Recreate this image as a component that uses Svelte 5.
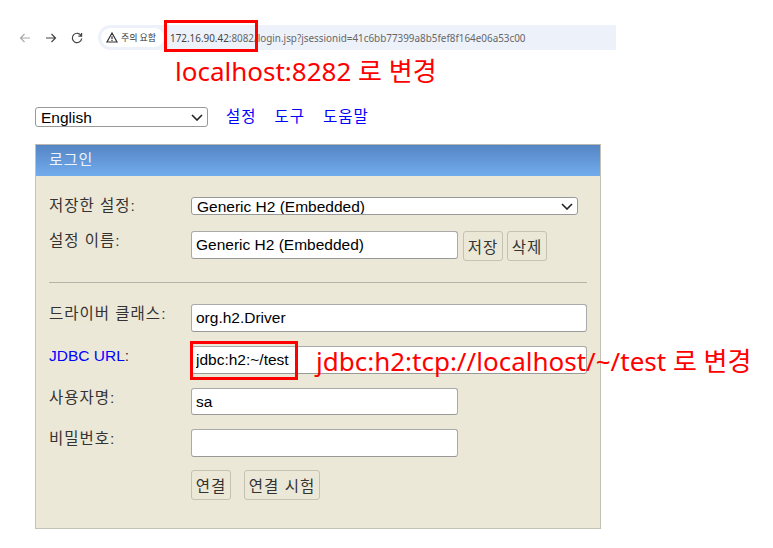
<script lang="ts">
  let language = $state("en");
  let saved = $state("Generic H2 (Embedded)");
  let name = $state("Generic H2 (Embedded)");
  let driver = $state("org.h2.Driver");
  let url = $state("jdbc:h2:~/test");
  let user = $state("sa");
  let password = $state("");
</script>

{#snippet chevron()}
  <svg class="chevron" width="12" height="7" viewBox="0 0 12 7"><path d="M1 1l5 5 5-5" /></svg>
{/snippet}

<div class="page">
  <!-- browser address bar -->
  <div class="toolbar">
    <div class="nav">
      <svg width="12" height="12" viewBox="0 0 12 12" class="dim"><path d="M11 6H1.5M5.5 2 1.5 6l4 4" /></svg>
      <svg width="12" height="12" viewBox="0 0 12 12"><path d="M1 6h9.5M6.5 2l4 4-4 4" /></svg>
      <svg width="12" height="12" viewBox="0 0 12 12"><path d="M10.3 4A4.7 4.7 0 1 0 10.7 6.5M10.6 1v3.2H7.4" /></svg>
    </div>
    <div class="omnibox">
      <span class="chip">
        <svg width="12" height="11" viewBox="0 0 12 11"><path d="M6 1 1 10h10zM6 4.2v3M6 8v1" /></svg>
        주의 요함
      </span>
      <span class="address"><b>172.16.90.42</b>:8082/login.jsp?jsessionid=41c6bb77399a8b5fef8f164e06a53c00</span>
    </div>
  </div>

  <!-- H2 console login -->
  <div class="content">
    <div class="lang-row">
      <div class="select-wrap lang">
        <select bind:value={language}>
          <option value="en">English</option>
          <option value="ko">한국어</option>
        </select>
        {@render chevron()}
      </div>
      <a href="#settings">설정</a>
      <a href="#tools">도구</a>
      <a href="#help">도움말</a>
    </div>

    <div class="panel">
      <div class="panel-head">로그인</div>
      <div class="panel-body">
        <div class="row first">
          <span class="label">저장한 설정:</span>
          <div class="select-wrap saved">
            <select bind:value={saved}>
              <option>Generic H2 (Embedded)</option>
              <option>Generic H2 (Server)</option>
            </select>
            {@render chevron()}
          </div>
        </div>
        <div class="row name-row">
          <span class="label">설정 이름:</span>
          <input class="short" bind:value={name} />
          <button class="side first-side">저장</button>
          <button class="side">삭제</button>
        </div>
        <hr />
        <div class="row">
          <span class="label">드라이버 클래스:</span>
          <input class="wide" bind:value={driver} />
        </div>
        <div class="row">
          <span class="label"><a href="#url" class="plain">JDBC URL</a>:</span>
          <input class="wide" bind:value={url} />
        </div>
        <div class="row user-row">
          <span class="label">사용자명:</span>
          <input class="short" bind:value={user} />
        </div>
        <div class="row">
          <span class="label">비밀번호:</span>
          <input class="short" type="password" bind:value={password} />
        </div>
        <div class="row actions">
          <span class="label"></span>
          <button class="connect">연결</button>
          <button class="test">연결 시험</button>
        </div>
      </div>
    </div>
  </div>

  <!-- annotations pasted on top of the screenshot -->
  <div class="mark mark-host"></div>
  <div class="note note-host">localhost:8282 로 변경</div>
  <div class="mark mark-url"></div>
  <div class="note note-url">jdbc:h2:tcp://localhost/~/test 로 변경</div>
</div>

<style>
  :global(body) {
    margin: 0;
    background: #ffffff;
  }
  .page {
    position: relative;
    width: 773px;
    height: 548px;
    overflow: hidden;
    font-family: "Liberation Sans", "Noto Sans CJK KR", sans-serif;
    color: #333;
  }
  .toolbar {
    display: flex;
    align-items: center;
    height: 25px;
    padding: 25px 0 0 19px;
  }
  .nav {
    display: flex;
    gap: 14px;
    width: 79px;
  }
  .nav svg {
    fill: none;
    stroke: #444;
    stroke-width: 1.2;
  }
  .nav .dim {
    stroke: #aaa;
  }
  .omnibox {
    display: flex;
    align-items: center;
    width: 515px;
    height: 25px;
    padding-left: 3px;
    background: #edf2fa;
    border-radius: 13px 0 0 13px;
  }
  .chip {
    display: flex;
    align-items: center;
    gap: 3px;
    width: 58px;
    height: 19px;
    padding-left: 5px;
    background: #fff;
    border-radius: 10px;
    font-family: "Noto Sans CJK KR", sans-serif;
    font-size: 9px;
    color: #333;
    white-space: nowrap;
  }
  .chip svg {
    flex: none;
    fill: none;
    stroke: #333;
    stroke-width: 1.2;
  }
  .address {
    margin-left: 6px;
    font-family: "Noto Sans", sans-serif;
    font-size: 9.9px;
    color: #666;
    white-space: nowrap;
  }
  .address b {
    font-weight: 400;
    color: #444;
  }
  .content {
    padding: 57px 0 0 35px;
  }
  .lang-row {
    display: flex;
    align-items: flex-start;
    height: 20px;
    font-size: 15.5px;
    line-height: 19px;
    letter-spacing: 1px;
  }
  .lang-row a {
    margin-right: 18px;
    color: #0000ff;
    text-decoration: none;
  }
  .select-wrap {
    position: relative;
    box-sizing: border-box;
  }
  .select-wrap select {
    display: block;
    width: 100%;
    height: 100%;
    appearance: none;
    box-sizing: border-box;
    padding: 0 0 0 5px;
    font-family: "Liberation Sans", sans-serif;
    font-size: 15.5px;
    color: #000;
    background: #fff;
    border: 1px solid #999;
    border-radius: 3px;
  }
  .chevron {
    position: absolute;
    top: 50%;
    right: 5px;
    margin-top: -3px;
    fill: none;
    stroke: #222;
    stroke-width: 1.6;
    pointer-events: none;
  }
  .lang {
    width: 173px;
    height: 20px;
    margin-right: 18px;
  }
  .panel {
    width: 566px;
    height: 385px;
    margin-top: 17px;
    box-sizing: border-box;
    border: 1px solid #c4c2b4;
    border-top-color: #b8b8b0;
    background: #ece8d8;
  }
  .panel-head {
    height: 31px;
    line-height: 30px;
    padding-left: 13px;
    font-size: 15px;
    letter-spacing: 1px;
    color: #eef3fa;
    background: linear-gradient(#5585c4, #72aced);
  }
  .panel-body {
    padding: 21px 13px 0;
  }
  .row {
    display: flex;
    align-items: flex-start;
    height: 28px;
    margin-bottom: 14px;
  }
  .row.first {
    height: 18px;
    margin-bottom: 16px;
  }
  .name-row {
    margin-bottom: 0;
  }
  .user-row {
    height: 27px;
  }
  .user-row input {
    height: 27px;
  }
  .label {
    flex: none;
    width: 142px;
    margin-top: 1px;
    font-size: 15.5px;
    line-height: 18px;
    letter-spacing: 1px;
    color: #333;
  }
  .row.first .label {
    margin-top: 0;
  }
  .name-row .label {
    margin-top: 1px;
  }
  .plain {
    letter-spacing: 0;
    color: #0000ff;
    text-decoration: none;
  }
  .saved {
    width: 387px;
    height: 18px;
  }
  input {
    box-sizing: border-box;
    height: 28px;
    padding: 0 4px;
    font-family: "Liberation Sans", sans-serif;
    font-size: 15.5px;
    color: #000;
    background: #fff;
    border: 1px solid #aaa;
    border-bottom-color: #999;
    border-radius: 3px;
  }
  .short {
    width: 267px;
  }
  .wide {
    width: 396px;
  }
  button {
    box-sizing: border-box;
    height: 30px;
    padding: 0;
    font-family: "Liberation Sans", "Noto Sans CJK KR", sans-serif;
    font-size: 15.5px;
    letter-spacing: 1px;
    color: #333;
    background: #ece8d8;
    border: 1px solid #c4c2b4;
    border-radius: 3px;
  }
  .side {
    width: 40px;
    margin-left: 4px;
  }
  .first-side {
    margin-left: 5px;
  }
  hr {
    height: 1px;
    margin: 23px 0 21px;
    border: 0;
    background: #b5b4ab;
  }
  .actions {
    height: 30px;
    margin-top: -1px;
    gap: 13px;
  }
  .actions .label {
    margin-right: -13px;
  }
  .connect {
    width: 40px;
  }
  .test {
    width: 76px;
  }
  .mark {
    position: absolute;
    box-sizing: border-box;
    border: 3px solid #ff0000;
  }
  .mark-host {
    left: 164px;
    top: 20px;
    width: 94px;
    height: 32px;
  }
  .mark-url {
    left: 190px;
    top: 341px;
    width: 108px;
    height: 39px;
  }
  .note {
    position: absolute;
    font-family: "Noto Sans", "Noto Sans CJK KR", sans-serif;
    font-size: 26px;
    line-height: 34px;
    color: #ff0000;
    white-space: nowrap;
  }
  .note-host {
    left: 175px;
    top: 54px;
  }
  .note-url {
    left: 316px;
    top: 344px;
  }
</style>
